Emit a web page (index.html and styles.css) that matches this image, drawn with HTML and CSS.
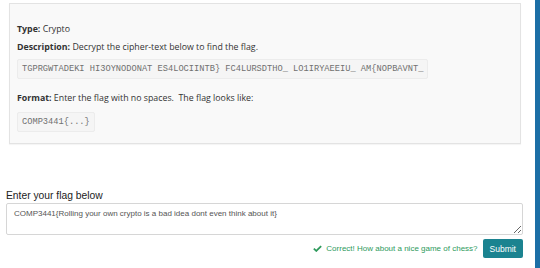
FILE: index.html
```html
<!DOCTYPE html>
<html>
<head>
    <title>Crypto challenge</title>
    <meta name="viewport" content="width=device-width, initial-scale=1.0">
    <link rel="stylesheet" href="styles.css">
</head>
<body>
    <div class="main">
        <div class="challenge">
            <p class="line"><b>Type:</b> Crypto</p>
            <p class="line"><b>Description:</b> Decrypt the cipher-text below to find the flag.</p>
            <code class="cipher">TGPRGWTADEKI HI3OYNODONAT ES4LOCIINTB} FC4LURSDTHO_ LO1IRYAEEIU_ AM{NOPBAVNT_</code>
            <p class="line format"><b>Format:</b> Enter the flag with no spaces.&nbsp; The flag looks like:</p>
            <code class="cipher">COMP3441{...}</code>
        </div>

        <form class="flag-form">
            <label class="flag-label" for="flag">Enter your flag below</label>
            <textarea id="flag" class="flag-input">COMP3441{Rolling your own crypto is a bad idea dont even think about it}</textarea>
            <div class="actions">
                <span class="result">
                    <svg class="tick" viewBox="0 0 10 8" width="9" height="7"><path d="M0.8 4.2 L3.6 6.8 L9.2 1.2" fill="none" stroke="#2e9a5c" stroke-width="2"/></svg>
                    Correct! How about a nice game of chess?
                </span>
                <button type="button" class="submit">Submit</button>
            </div>
        </form>
    </div>
    <div class="sidebar"></div>
</body>
</html>
```

FILE: styles.css
```css
html, body {margin: 0; height: 100%;}
body {display: flex; background: #fff; font-family: "Open Sans", sans-serif; color: #333;}
.main {flex: 1; padding: 0 12px 0 6px;}
.sidebar {width: 5px; background: #1c6fa6;}

.challenge {margin: 3px 2px 0 3px; height: 141px; box-sizing: border-box; padding: 19px 8px 0 7px; background: #f9f9f9; border: 1px solid #e3e3e3; box-shadow: 0 1px 1px rgba(0,0,0,0.04);}
.line {margin: 0 0 6px; font-size: 8.8px; line-height: 12px;}
.line b {font-weight: 700;}
.format {margin-top: 13px; margin-bottom: 8px;}
.cipher {display: block; width: fit-content; padding: 3px 4px; font-family: "Liberation Mono", monospace; font-size: 8.7px; line-height: 12px; color: #707070; background: #f5f5f5; border: 1px solid #ececec; border-radius: 2px;}

.flag-form {margin-top: 46px;}
.flag-label {display: block; font-family: "Liberation Sans", Arial, sans-serif; font-size: 10.3px; color: #222; margin-bottom: 2px;}
.flag-input {display: block; width: 100%; height: 32px; box-sizing: border-box; padding: 5px 7px; font-family: "Liberation Sans", Arial, sans-serif; font-size: 8px; color: #555; border: 1px solid #d6d6d6; border-radius: 2px; resize: vertical;}
.actions {display: flex; justify-content: flex-end; align-items: center; gap: 5px; margin-top: 4px;}
.result {font-family: "Liberation Sans", Arial, sans-serif; font-size: 8px; color: #2e9a5c; display: flex; align-items: center; gap: 4px;}
.submit {font-family: "Liberation Sans", Arial, sans-serif; font-size: 8.5px; color: #fff; background: #1b8390; border: 0; border-radius: 2px; padding: 0 7px; height: 19px;}
```
